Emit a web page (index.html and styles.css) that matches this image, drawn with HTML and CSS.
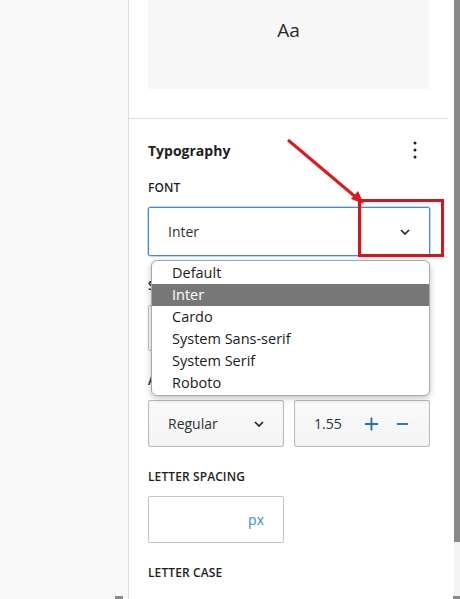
FILE: index.html
```html
<!DOCTYPE html>
<html lang="en">
<head>
<meta charset="utf-8">
<title>Typography</title>
<link rel="stylesheet" href="styles.css">
</head>
<body>
<div class="app">
  <div class="canvas-area"></div>
  <div class="sidebar">
    <div class="preview"><span class="preview-text">Aa</span></div>
    <div class="divider"></div>
    <div class="panel">
      <div class="panel-head">
        <h2 class="panel-title">Typography</h2>
        <svg class="kebab" width="4" height="18" viewBox="0 0 4 18"><circle cx="2" cy="2" r="1.5"/><circle cx="2" cy="9" r="1.5"/><circle cx="2" cy="16" r="1.5"/></svg>
      </div>
      <div class="field">
        <div class="label">Font</div>
        <div class="select select-focus">
          <span>Inter</span>
          <svg class="chev" width="10" height="6" viewBox="0 0 10 6"><path d="M1 1l4 4 4-4" fill="none" stroke="#1e1e1e" stroke-width="1.6"/></svg>
        </div>
        <div class="menu">
          <div class="menu-item">Default</div>
          <div class="menu-item active">Inter</div>
          <div class="menu-item">Cardo</div>
          <div class="menu-item">System Sans-serif</div>
          <div class="menu-item">System Serif</div>
          <div class="menu-item">Roboto</div>
        </div>
      </div>
      <div class="field">
        <div class="label">Size</div>
        <div class="box box-size"></div>
      </div>
      <div class="field">
        <div class="label">Appearance</div>
        <div class="row">
          <div class="select select-gray">
            <span>Regular</span>
            <svg class="chev" width="10" height="6" viewBox="0 0 10 6"><path d="M1 1l4 4 4-4" fill="none" stroke="#1e1e1e" stroke-width="1.6"/></svg>
          </div>
          <div class="select select-gray number">
            <span class="num">1.55</span>
            <svg class="step" width="16" height="16" viewBox="0 0 16 16"><path d="M8 1v14M1 8h14" stroke="#2271b1" stroke-width="2"/></svg>
            <svg class="step" width="14" height="16" viewBox="0 0 14 16"><path d="M1 8h12" stroke="#2271b1" stroke-width="2"/></svg>
          </div>
        </div>
      </div>
      <div class="field">
        <div class="label">Letter spacing</div>
        <div class="box box-unit"><span class="unit">px</span></div>
      </div>
      <div class="field">
        <div class="label">Letter case</div>
      </div>
    </div>
    <svg class="annot" width="460" height="599" viewBox="0 0 460 599">
      <line x1="288" y1="140" x2="358" y2="199" stroke="#dc1a20" stroke-width="3"/>
      <path d="M364 204 L351 199 L358 191 Z" fill="#dc1a20"/>
      <rect x="359.5" y="200.5" width="83" height="55" fill="none" stroke="#d7141b" stroke-width="3"/>
    </svg>
  </div>
  <div class="scrollbar"><div class="thumb"></div></div>
</div>
<div class="bottom-mark left-mark"></div>
<div class="bottom-mark right-mark"></div>
</body>
</html>
```

FILE: styles.css
```css
html, body {
  margin: 0;
  padding: 0;
}
body {
  width: 460px;
  height: 599px;
  overflow: hidden;
  background: #f9f9f9;
  font-family: "Open Sans", "Noto Sans", sans-serif;
  color: #1e1e1e;
  position: relative;
}
.app {
  display: flex;
  height: 599px;
}
.canvas-area {
  width: 128px;
  flex: none;
  background: #f8f8f8;
}
.sidebar {
  width: 325px;
  flex: none;
  background: #fff;
  border-left: 1px solid #dcdcdc;
  position: relative;
}
.preview {
  margin: -29px 0 0 19px;
  width: 281px;
  height: 118px;
  background: #f7f7f7;
  display: flex;
  align-items: center;
  justify-content: center;
}
.preview-text {
  font-size: 19px;
  color: #2a2a2a;
}
.divider {
  margin-top: 29px;
  margin-right: 6px;
  height: 1px;
  background: #dcdcdc;
}
.panel {
  padding: 21px 24px 0 19px;
}
.panel-head {
  display: flex;
  align-items: center;
  justify-content: space-between;
  height: 20px;
  margin-bottom: 20px;
}
.panel-title {
  margin: 0;
  font-size: 14px;
  font-weight: 700;
  color: #1e1e1e;
}
.kebab {
  fill: #1e1e1e;
  margin-right: 13px;
}
.field {
  position: relative;
  margin-bottom: 22px;
}
.label {
  font-size: 12px;
  font-weight: 600;
  letter-spacing: 0.1px;
  text-transform: uppercase;
  line-height: 16px;
  color: #1e1e1e;
  margin-bottom: 11px;
}
.select {
  box-sizing: border-box;
  height: 49px;
  border: 1px solid #c3c4c7;
  border-radius: 2px;
  display: flex;
  align-items: center;
  padding: 0 19px;
  font-size: 14px;
  color: #2c3338;
}
.select span {
  flex: 1;
}
.select-focus {
  width: 282px;
  border-color: #4a8cc7;
  box-shadow: 0 0 0 0.5px #7fb2dd;
}
.menu {
  position: absolute;
  left: 3px;
  top: 80px;
  width: 279px;
  box-sizing: border-box;
  padding: 1px 0;
  background: #fff;
  border: 1px solid #a9a9a9;
  border-radius: 6px;
  box-shadow: 0 2px 6px rgba(0,0,0,0.25);
  z-index: 5;
  overflow: hidden;
}
.menu-item {
  height: 22px;
  line-height: 22px;
  padding-left: 20px;
  font-size: 14.5px;
  color: #1a1a1a;
}
.menu-item.active {
  background: #777;
  color: #fff;
}
.box {
  box-sizing: border-box;
  border: 1px solid #c3c4c7;
  border-radius: 2px;
  background: #fff;
}
.box-size {
  height: 46px;
  width: 282px;
}
.row {
  display: flex;
  gap: 10px;
}
.select-gray {
  width: 136px;
  height: 47px;
  background: linear-gradient(#fafafa, #f4f4f4);
  border-color: #bcbcbc;
  box-shadow: inset 0 0 2px rgba(0,0,0,0.08);
}
.number {
  padding: 0 20px 0 19px;
}
.number .num {
  flex: none;
  width: 50px;
}
.number .step + .step {
  margin-left: 17px;
}
.box-unit {
  width: 136px;
  height: 47px;
  display: flex;
  align-items: center;
  justify-content: flex-end;
  padding-right: 19px;
}
.unit {
  font-size: 14px;
  color: #3d8fc6;
}
.annot {
  position: absolute;
  left: -129px;
  top: 0;
  pointer-events: none;
  z-index: 10;
}
.scrollbar {
  width: 6px;
  flex: none;
  background: #f4f4f4;
}
.thumb {
  height: 542px;
  background: #898989;
}
.bottom-mark {
  position: absolute;
  bottom: 0;
  height: 3px;
  background: #8a8a8a;
}
.left-mark {
  left: 115px;
  width: 8px;
}
.right-mark {
  left: 453px;
  width: 7px;
}
```
